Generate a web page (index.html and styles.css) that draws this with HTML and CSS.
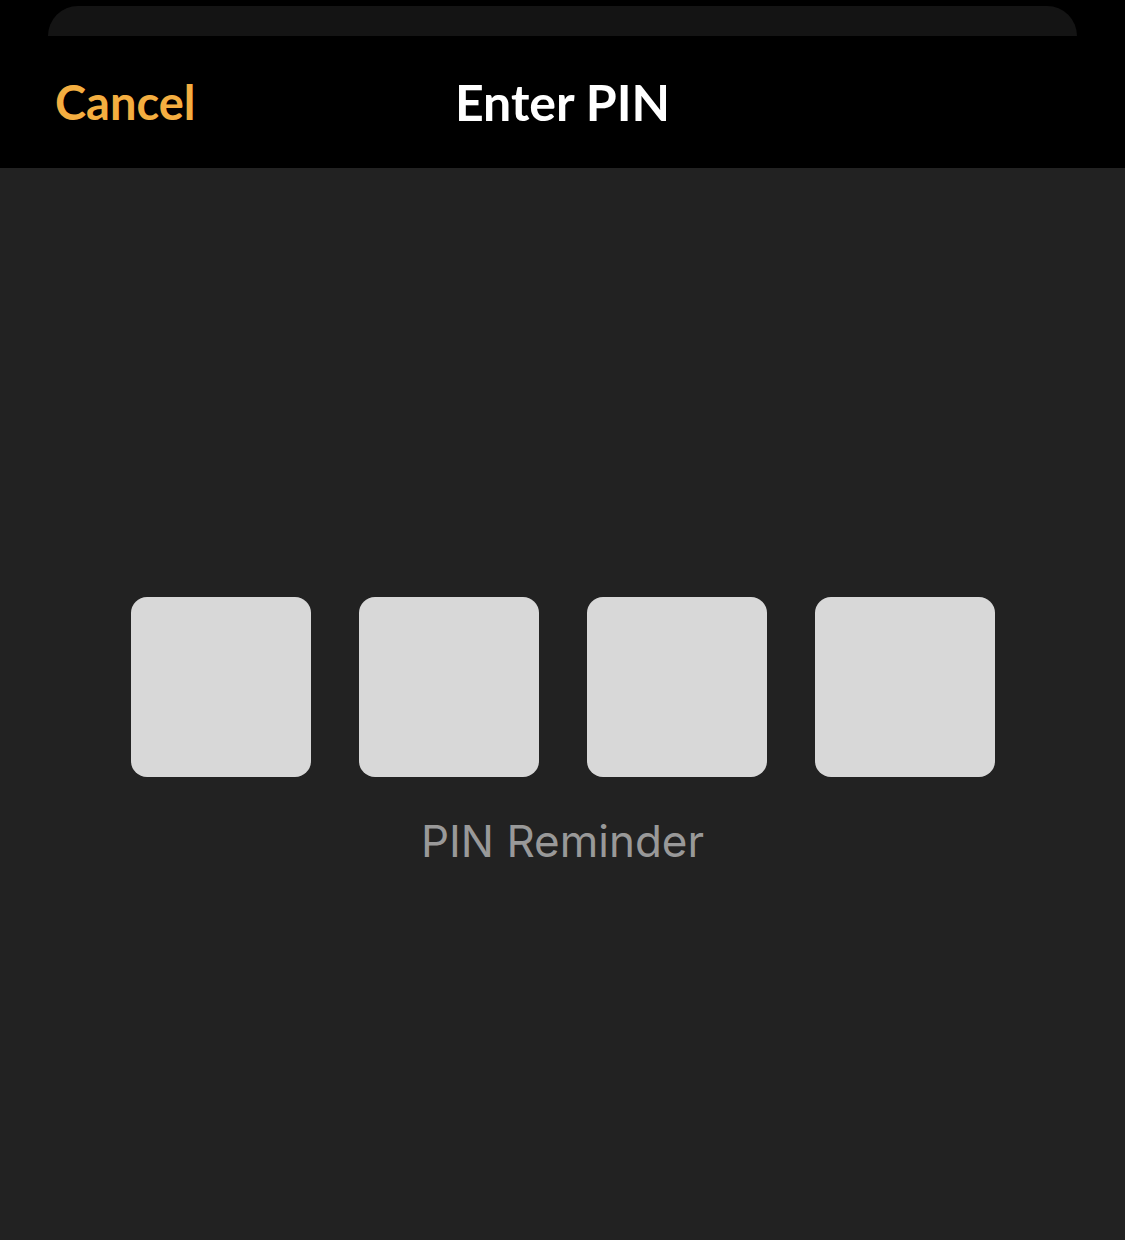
FILE: index.html
```html
<!DOCTYPE html>
<html lang="en">
<head>
<meta charset="utf-8">
<meta name="viewport" content="width=device-width, initial-scale=1">
<title>Enter PIN</title>
<link rel="stylesheet" href="styles.css">
</head>
<body>
<div class="sheet-edge"></div>
<header class="navbar">
  <button class="cancel" type="button">Cancel</button>
  <h1 class="title">Enter PIN</h1>
</header>
<main class="content">
  <form class="pin-form">
    <div class="pin-row">
      <input class="pin-box" type="password" inputmode="numeric" maxlength="1" aria-label="PIN digit 1">
      <input class="pin-box" type="password" inputmode="numeric" maxlength="1" aria-label="PIN digit 2">
      <input class="pin-box" type="password" inputmode="numeric" maxlength="1" aria-label="PIN digit 3">
      <input class="pin-box" type="password" inputmode="numeric" maxlength="1" aria-label="PIN digit 4">
    </div>
    <button class="reminder" type="button">PIN Reminder</button>
  </form>
</main>
</body>
</html>
```
FILE: styles.css
```css
* {
  box-sizing: border-box;
}

body {
  margin: 0;
  min-height: 100vh;
  display: flex;
  flex-direction: column;
  background: #000;
  color: #fff;
  font-family: Lato, sans-serif;
}

.sheet-edge {
  height: 30px;
  margin: 6px 48px 0;
  border-radius: 30px 30px 0 0;
  background: #141414;
}

.navbar {
  display: grid;
  grid-template-columns: 1fr auto 1fr;
  align-items: center;
  min-height: 132px;
  padding: 0 55px;
}

.cancel,
.reminder {
  padding: 0;
  border: 0;
  background: none;
  cursor: pointer;
}

.cancel {
  justify-self: start;
  color: #f4ae40;
  font: 700 47px/60px Lato, sans-serif;
}

.title {
  margin: 0;
  font-size: 50px;
  font-weight: 700;
  line-height: 60px;
}

.content {
  flex: 1;
  display: flex;
  flex-direction: column;
  align-items: center;
  justify-content: center;
  padding: 118px 24px 60px;
  background: #222;
}

.pin-form {
  display: flex;
  flex-direction: column;
  align-items: center;
  gap: 36px;
  width: 100%;
  max-width: 864px;
}

.pin-row {
  display: grid;
  grid-template-columns: repeat(4, 1fr);
  gap: 48px;
  width: 100%;
}

.pin-box {
  width: 100%;
  min-width: 0;
  aspect-ratio: 1;
  padding: 0;
  border: 0;
  border-radius: 16px;
  background: #d8d8d8;
  color: #222;
  font: 72px Inter, sans-serif;
  text-align: center;
}

.reminder {
  color: #999;
  font: 400 44px/56px Inter, sans-serif;
}
```
